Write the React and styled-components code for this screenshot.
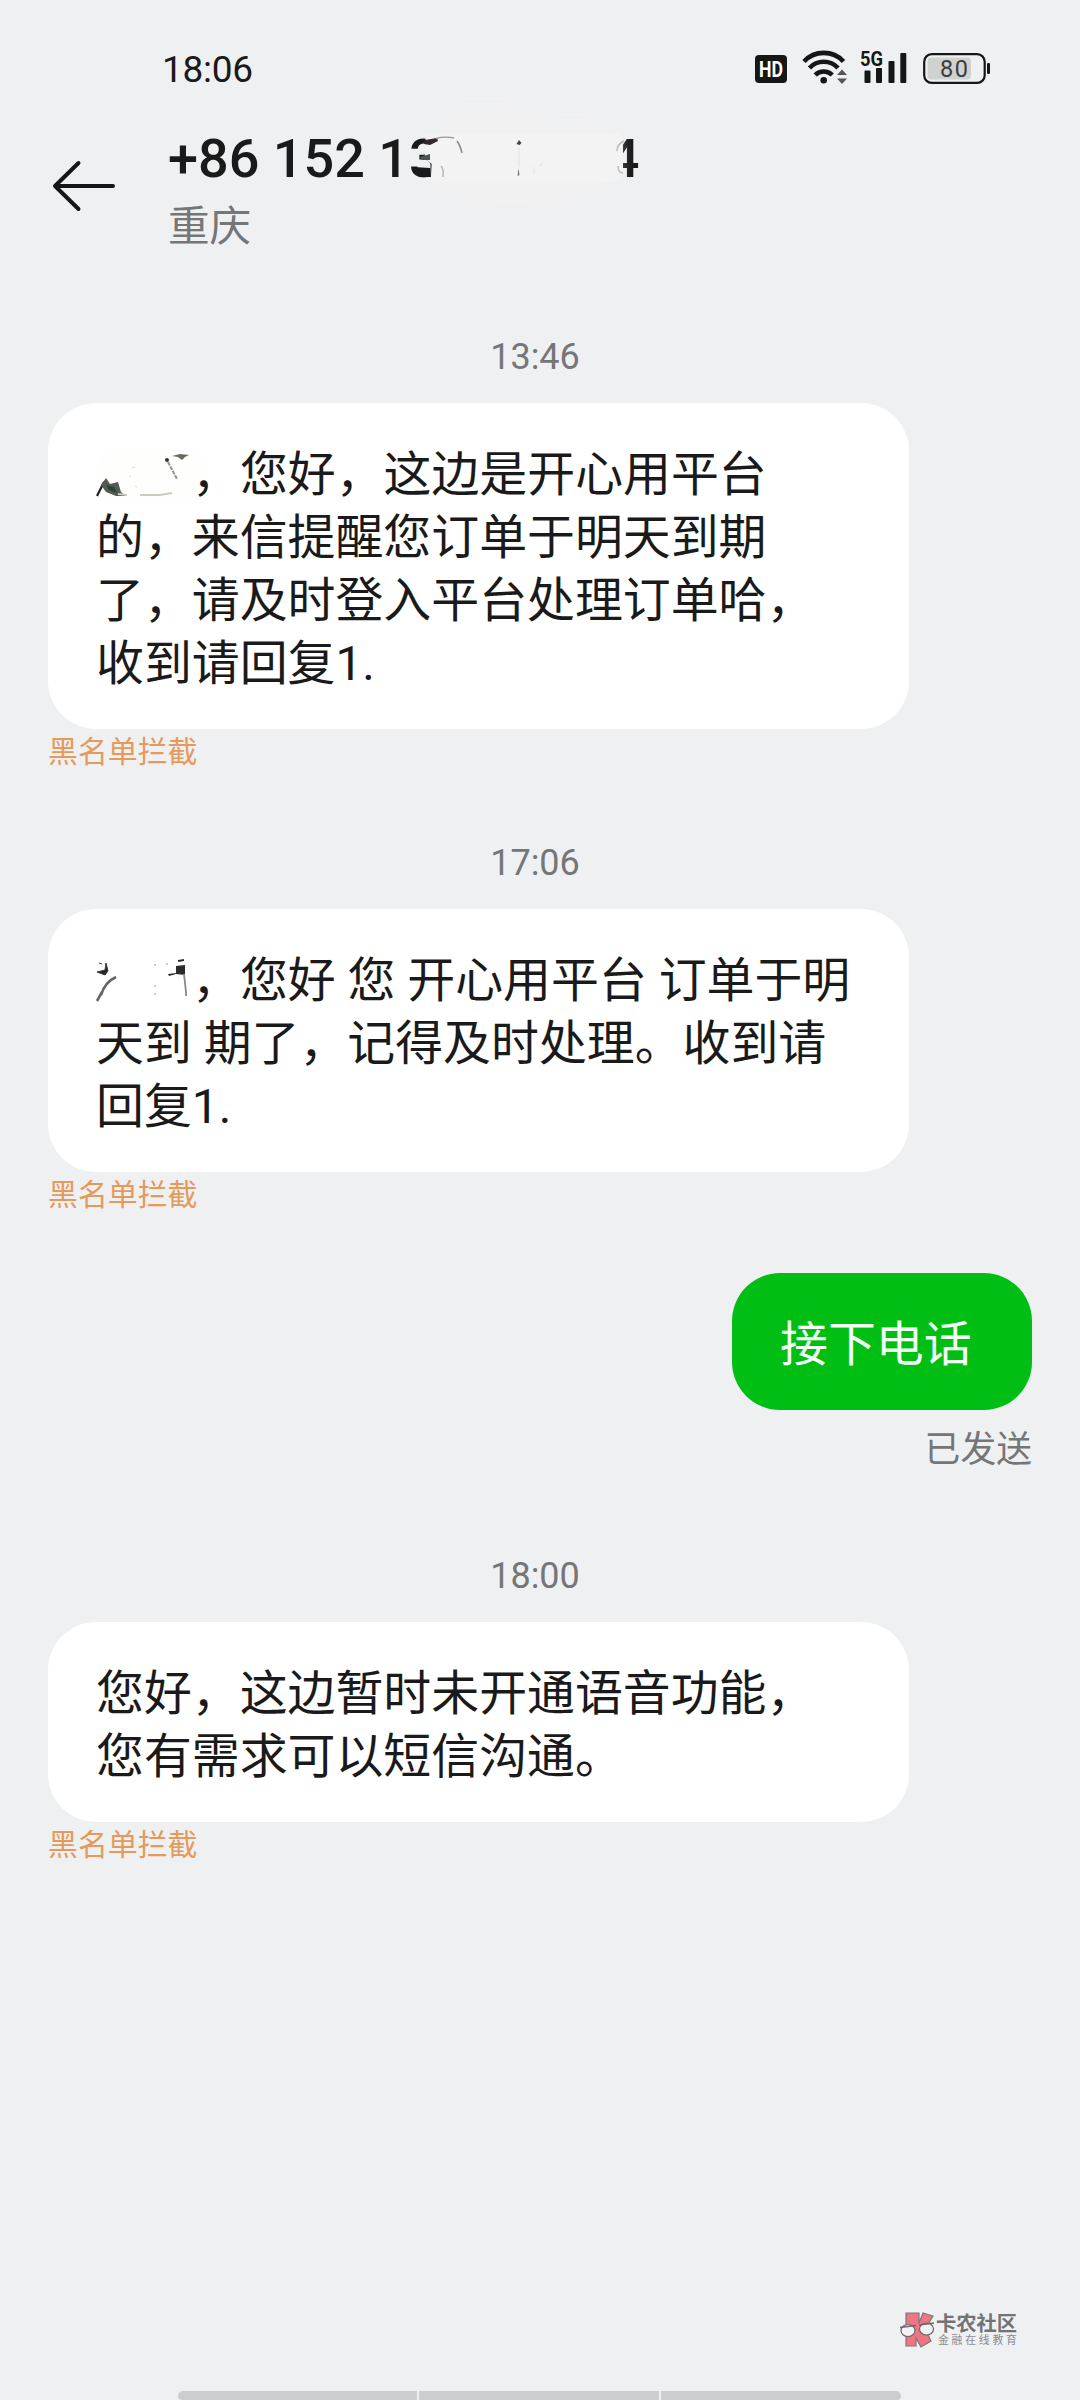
import React from 'react';
import styled, { createGlobalStyle } from 'styled-components';

const GlobalStyle = createGlobalStyle`
  * {
    box-sizing: border-box;
  }

  body {
    margin: 0;
    background: #eff0f2;
    font-family: Roboto, "Noto Sans CJK SC", sans-serif;
    color: #1a1a1a;
  }
`;

const Screen = styled.div`
  display: flex;
  flex-direction: column;
  width: 1080px;
  height: 2400px;
  overflow: hidden;
`;

const StatusBar = styled.div`
  display: flex;
  justify-content: space-between;
  height: 100px;
  padding: 47px 89px 0 162px;
`;

const Clock = styled.span`
  padding-top: 1px;
  font-size: 37px;
  line-height: 44px;
  letter-spacing: -0.3px;
`;

const StatusIcons = styled.svg`
  display: block;
  width: 240px;
  height: 44px;
`;

const Header = styled.header`
  display: flex;
  height: 203px;
  padding-left: 50px;
`;

const BackIcon = styled.svg`
  width: 68px;
  height: 60px;
  margin: 56px 50px 0 0;
`;

const Contact = styled.div`
  display: flex;
  flex-direction: column;
  padding-top: 25px;
`;

const PhoneNumber = styled.h1`
  position: relative;
  display: flex;
  margin: 0;
  font-size: 54px;
  font-weight: 500;
  line-height: 68px;
  white-space: nowrap;
`;

const LastDigit = styled.span`
  margin-left: 169px;
`;

const NumberSmudge = styled.svg`
  position: absolute;
  left: 232px;
  top: -45px;
  width: 240px;
  height: 160px;
`;

const Region = styled.span`
  margin-top: 6px;
  font-size: 41.6px;
  line-height: 56px;
  color: #757678;
`;

const Thread = styled.main`
  display: flex;
  flex: 1;
  flex-direction: column;
  padding: 0 48px;
`;

const Time = styled.time`
  margin-top: ${({ $gap }) => $gap}px;
  height: 68px;
  padding-right: 10px;
  font-size: 36px;
  line-height: 44px;
  text-align: center;
  color: #757678;
`;

const Bubble = styled.div`
  align-self: ${({ $sent }) => ($sent ? 'flex-end' : 'flex-start')};
  width: ${({ $sent }) => ($sent ? 300 : 861)}px;
  padding: 41px 0 33px 48px;
  border-radius: 48px;
  background: ${({ $sent }) => ($sent ? '#00be14' : '#fff')};
  color: ${({ $sent }) => ($sent ? '#f2fff2' : '#1a1a1a')};
  font-size: 47.9px;
`;

const Line = styled.div`
  height: 63px;
  line-height: 63px;
  white-space: pre;
`;

const NameSmudge = styled.svg`
  width: 96px;
  height: 52px;
  vertical-align: -9px;
  overflow: visible;
`;

const BlockedLabel = styled.span`
  height: 43px;
  padding-top: 1px;
  font-size: 29.9px;
  line-height: 43px;
  color: #e59a5c;
`;

const SentLabel = styled.span`
  align-self: flex-end;
  margin-top: 15px;
  height: 49px;
  font-size: 35.8px;
  line-height: 50px;
  color: #757678;
`;

const SentGroup = styled.div`
  display: flex;
  flex-direction: column;
  margin-top: 58px;
`;

const Footer = styled.footer`
  display: flex;
  flex-direction: column;
`;

const Watermark = styled.div`
  display: flex;
  align-self: flex-end;
  width: 180px;
  height: 80px;
`;

const WatermarkLogo = styled.svg`
  width: 36px;
  height: 38px;
`;

const WatermarkText = styled.div`
  display: flex;
  flex-direction: column;
  padding-top: 2px;
`;

const WatermarkName = styled.span`
  font-size: 20.3px;
  font-weight: 700;
  line-height: 22px;
  color: #727375;
`;

const WatermarkSlogan = styled.span`
  margin-left: 2px;
  font-size: 10.8px;
  line-height: 12px;
  letter-spacing: 2.8px;
  color: #8b8c8e;
`;

const Dock = styled.div`
  display: flex;
  align-self: center;
  gap: 2px;
  width: 723px;
  height: 9px;
  margin-right: 2px;
  border-radius: 5px 5px 4px 4px;
  overflow: hidden;
`;

const DockPart = styled.div`
  flex: 1;
  background: #cccdcd;
`;

function PhoneStatus() {
  return (
    <StatusIcons viewBox="0 0 240 44">
      <rect x="4" y="8" width="32" height="28" rx="4" fill="#161616" />
      <text x="20" y="30" fontSize="22" fontWeight="700" fill="#fff" textAnchor="middle" textLength="24" lengthAdjust="spacingAndGlyphs">HD</text>
      <g fill="none" stroke="#161616" strokeWidth="4.6">
        <path d="M53 14.5a27 27 0 0 1 39.500 0" />
        <path d="M58.500 21a19.500 19.500 0 0 1 28.500 0" />
        <path d="M64.200 28a12 12 0 0 1 17 0" />
      </g>
      <circle cx="72.700" cy="33.300" r="3.300" fill="#161616" />
      <path d="M86 28l5-5.500 5 5.500zM86 31.500h10l-5 5.500z" fill="#555" />
      <text x="109" y="19" fontSize="20" fontWeight="700" fill="#161616" textLength="23" lengthAdjust="spacingAndGlyphs">5G</text>
      <g fill="#161616">
        <rect x="113.500" y="23.500" width="6" height="12.500" rx="1" />
        <rect x="125" y="21" width="6" height="15" rx="1" />
        <rect x="137.500" y="14" width="6" height="22" rx="1" />
        <rect x="149.300" y="6" width="6" height="30" rx="1" />
      </g>
      <rect x="173.200" y="7.200" width="60.500" height="28.600" rx="7.500" fill="none" stroke="#161616" strokeWidth="2.200" />
      <rect x="176.500" y="10.500" width="43.500" height="22" rx="4" fill="#d0d1d1" />
      <text x="203" y="29.500" fontSize="23.500" fill="#3c3c3c" textAnchor="middle" textLength="28">80</text>
      <rect x="236" y="16" width="3" height="11" rx="1.200" fill="#161616" />
    </StatusIcons>
  );
}

function BlurredNumber() {
  return (
    <NumberSmudge viewBox="0 0 240 160">
      <defs>
        <filter id="haze" x="-20%" y="-20%" width="140%" height="140%">
          <feGaussianBlur stdDeviation="7" />
        </filter>
      </defs>
      <path d="M44 20h80l20 16h60l14 20v40l-14 20-60 12h-60l-60-14 10-40z" fill="#f2f2f2" opacity="0.7" filter="url(#haze)" />
      <path d="M26 54h194l3 4v38l-6 5H31l0-5 1-12-8-6 2-6-1-8z" fill="#f3f3f3" />
      <path d="M25 60l12-2 1 3-8 4-6-1z" fill="#33282b" />
      <path d="M36 58.500q9-2.500 18-0.500" fill="none" stroke="#999" strokeWidth="1.400" />
      <path d="M57 61q3 4 5 12" fill="none" stroke="#8a8a8a" strokeWidth="1.600" />
      <path d="M20 77l10-3v6h-8z" fill="#50544f" />
      <path d="M14 87l16 1 1 9-12 0z" fill="#17191c" />
      <path d="M41 86q3 3 2 11" fill="none" stroke="#b5b5b5" strokeWidth="1.500" />
      <path d="M119 60l2.500 3-2 2-3-1z" fill="#444" />
      <path d="M118.500 88l1 7-2 1z" fill="#777" />
      <path d="M119 68v19M134 87v7M139 86l4-3" stroke="#e2e2df" />
      <path d="M224 61q-7 3-7 10M218 86q0 7 5 7" fill="none" stroke="#bdbdba" strokeWidth="1.500" />
    </NumberSmudge>
  );
}

function BlurredNameOne() {
  return (
    <NameSmudge viewBox="0 0 96 52">
      <path d="M2 5h104v46H8z" fill="#fefefd" />
      <path d="M1 48l7-14" stroke="#222" strokeWidth="2.200" />
      <path d="M5 37l5-7 4 6 8-2 3 10 5 4-10 0-10-4z" fill="#545b55" />
      <path d="M10 37l8 2 3 6-8-3z" fill="#26453a" />
      <path d="M22 46l9 1M44 47l20 0 12-2" fill="none" stroke="#c9cdbf" strokeWidth="2" />
      <path d="M76 8l8-2 9 1-4 2-3 3-4-3z" fill="#6a695f" />
      <circle cx="71" cy="12" r="2" fill="#333" />
      <path d="M72 14l9 17" stroke="#999286" strokeWidth="2" strokeDasharray="4 1" />
      <path d="M36 20l3-1M33 28l2 1M39 38l2 1" stroke="#ddd" />
    </NameSmudge>
  );
}

function BlurredNameTwo() {
  return (
    <NameSmudge viewBox="0 0 96 52">
      <path d="M1 18l8-2 1-7 2 8-3 4zM3 9l3 1" fill="#282226" stroke="#423a3e" />
      <path d="M1 47l5-9M5 41q4-13 15-18" fill="none" stroke="#66656f" strokeWidth="2.600" />
      <path d="M58 11h2M58 32h2M58 40h2M70 10h2" stroke="#ccc" strokeWidth="2" />
      <path d="M72 20l8-1 0-7 9-1v10l-9-1-7 2zM82 6l6-1v2l-6 1z" fill="#2b2b2b" />
      <path d="M88 20l2 18v4" fill="none" stroke="#888" strokeWidth="1.800" />
    </NameSmudge>
  );
}

function WatermarkBadge() {
  return (
    <WatermarkLogo viewBox="0 0 36 38">
      <path d="M6 2h13v10l4-10 10 3-8 13 6 12-10 6-5-9v8H6z" fill="#ee7683" stroke="#7d7678" strokeWidth="1.200" />
      <ellipse cx="8" cy="19.500" rx="7" ry="6" fill="#f1f2f3" stroke="#6d6668" strokeWidth="1.200" />
      <ellipse cx="26.500" cy="18" rx="7" ry="6" fill="#f1f2f3" stroke="#6d6668" strokeWidth="1.200" />
      <path d="M0 16.500l16-2M19 14l15-2" stroke="#6d6668" strokeWidth="1.400" />
    </WatermarkLogo>
  );
}

const App = () => {
  return (
    <>
      <GlobalStyle />
      <Screen>
        <StatusBar>
          <Clock>18:06</Clock>
          <PhoneStatus />
        </StatusBar>
        <Header>
          <BackIcon viewBox="0 0 68 60" fill="none" stroke="#161616" strokeWidth="4" strokeLinecap="round" strokeLinejoin="round">
            <path d="M63 30H5M28.500 7L5 30l23.500 23" />
          </BackIcon>
          <Contact>
            <PhoneNumber>
              <span>+86 152 13</span>
              <LastDigit>4</LastDigit>
              <BlurredNumber />
            </PhoneNumber>
            <Region>重庆</Region>
          </Contact>
        </Header>
        <Thread>
          <Time $gap={32}>13:46</Time>
          <Bubble>
            <Line><BlurredNameOne />，您好，这边是开心用平台</Line>
            <Line>的，来信提醒您订单于明天到期</Line>
            <Line>了，请及时登入平台处理订单哈，</Line>
            <Line>收到请回复1.</Line>
          </Bubble>
          <BlockedLabel>黑名单拦截</BlockedLabel>
          <Time $gap={69}>17:06</Time>
          <Bubble>
            <Line><BlurredNameTwo />，您好 您 开心用平台 订单于明</Line>
            <Line>天到 期了，记得及时处理。收到请</Line>
            <Line>回复1.</Line>
          </Bubble>
          <BlockedLabel>黑名单拦截</BlockedLabel>
          <SentGroup>
            <Bubble $sent>
              <Line>接下电话</Line>
            </Bubble>
            <SentLabel>已发送</SentLabel>
          </SentGroup>
          <Time $gap={80}>18:00</Time>
          <Bubble>
            <Line>您好，这边暂时未开通语音功能，</Line>
            <Line>您有需求可以短信沟通。</Line>
          </Bubble>
          <BlockedLabel>黑名单拦截</BlockedLabel>
        </Thread>
        <Footer>
          <Watermark>
            <WatermarkBadge />
            <WatermarkText>
              <WatermarkName>卡农社区</WatermarkName>
              <WatermarkSlogan>金融在线教育</WatermarkSlogan>
            </WatermarkText>
          </Watermark>
          <Dock>
            <DockPart />
            <DockPart />
            <DockPart />
          </Dock>
        </Footer>
      </Screen>
    </>
  );
};

export default App;
